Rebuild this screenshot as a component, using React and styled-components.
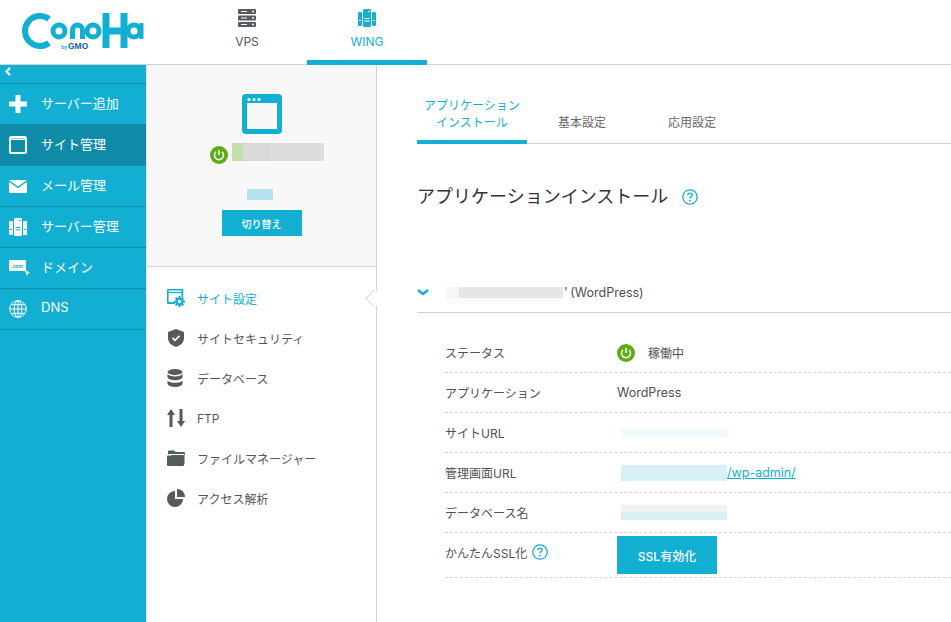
import React from "react";
import styled, { createGlobalStyle } from "styled-components";

const BLUE = "#13afd3";
const DARK = "#555a5c";

const GlobalStyle = createGlobalStyle`
  html, body {
    margin: 0;
    height: 100%;
    background: #fff;
    overflow: hidden;
  }
  body {
    font-family: Inter, "Noto Sans CJK JP", sans-serif;
    font-size: 12px;
    color: #505050;
  }
  * { box-sizing: border-box; }
`;

function Logo() {
  return (
    <svg width="160" height="64" viewBox="0 0 160 64">
      <g fill="none" stroke={BLUE}>
        <path d="M49 19A15 15 0 1 0 49 43" strokeWidth="6" />
        <circle cx="59" cy="31" r="6" strokeWidth="5" />
        <path d="M72.500 39V30a5 5 0 0 1 10 0v9" strokeWidth="5" />
        <circle cx="93" cy="31" r="6" strokeWidth="5" />
        <path d="M106 13v35M124 13v35M105 31h19" strokeWidth="7" />
        <circle cx="134" cy="31" r="6" strokeWidth="5" />
        <path d="M141.500 23v16" strokeWidth="4" />
      </g>
      <rect x="60" y="40.500" width="38" height="9.500" fill="#fff" />
      <text x="61" y="49" fontFamily="Liberation Sans, sans-serif" fontSize="5.500" fontWeight="700" fill={BLUE}>by</text>
      <text x="68" y="49" fontFamily="Liberation Sans, sans-serif" fontSize="8.500" fontWeight="700" fill="#1c5fa8">GMO</text>
    </svg>
  );
}

function VpsIcon() {
  return (
    <svg width="18" height="18" viewBox="0 0 18 18" fill={DARK}>
      <rect x="0" y="0" width="18" height="5" rx="1" />
      <rect x="0" y="6.500" width="18" height="5" rx="1" />
      <rect x="0" y="13" width="18" height="5" rx="1" />
      <g fill="#fff">
        <rect x="3" y="2" width="6" height="1" />
        <rect x="3" y="8.500" width="6" height="1" />
        <rect x="3" y="15" width="6" height="1" />
        <circle cx="15" cy="2.500" r="1" />
        <circle cx="15" cy="9" r="1" />
        <circle cx="15" cy="15.500" r="1" />
      </g>
    </svg>
  );
}

function ServersIcon({ color, size = 18 }) {
  return (
    <svg width={size} height={size} viewBox="0 0 18 18" fill={color}>
      <rect x="0" y="3" width="4" height="14" rx="1" />
      <rect x="14" y="3" width="4" height="14" rx="1" />
      <rect x="5" y="0" width="8" height="18" rx="1.500" />
      <g fill="var(--cut, #fff)">
        <rect x="6.500" y="9" width="5" height="1" />
        <rect x="6.500" y="11.500" width="5" height="1" />
        <rect x="1" y="11" width="2" height="1" />
        <rect x="15" y="11" width="2" height="1" />
        <circle cx="11" cy="2.500" r="0.800" />
      </g>
    </svg>
  );
}

function SideIcon({ name }) {
  if (name === "plus") {
    return (
      <svg width="18" height="18" viewBox="0 0 18 18" fill="#fff">
        <path d="M6.500 0h5v6.500H18v5h-6.500V18h-5v-6.500H0v-5h6.500z" />
      </svg>
    );
  }
  if (name === "window") {
    return (
      <svg width="18" height="18" viewBox="0 0 18 18">
        <rect x="1" y="1" width="16" height="16" rx="1.500" fill="none" stroke="#fff" strokeWidth="2" />
        <path d="M1 3.200h16" stroke="#fff" strokeWidth="1.500" />
      </svg>
    );
  }
  if (name === "mail") {
    return (
      <svg width="18" height="13" viewBox="0 0 18 13" fill="#fff">
        <path d="M0 0h18L9 6.500z" />
        <path d="M0 1.800l9 6.500 9-6.500V12a1 1 0 0 1-1 1H1a1 1 0 0 1-1-1z" />
      </svg>
    );
  }
  if (name === "server") return <Cut><ServersIcon color="#fff" /></Cut>;
  if (name === "domain") {
    return (
      <svg width="21" height="16" viewBox="0 0 21 16">
        <rect x="0" y="0" width="17" height="11" rx="1" fill="#fff" />
        <text x="2.500" y="7.500" fontFamily="Roboto, sans-serif" fontSize="5" fontWeight="700" fill={BLUE}>.com</text>
        <path d="M16 10l5 2.500-2 1-1 2.500z" fill="#fff" />
      </svg>
    );
  }
  return (
    <svg width="18" height="18" viewBox="0 0 18 18" fill="none" stroke="#fff" strokeWidth="1">
      <circle cx="9" cy="9" r="8.300" />
      <ellipse cx="9" cy="9" rx="3.800" ry="8.300" />
      <path d="M9 .7v16.600M.7 9h16.600M2 4.700h14M2 13.300h14" />
    </svg>
  );
}

function MenuIcon({ name }) {
  if (name === "settings") {
    return (
      <svg width="18" height="18" viewBox="0 0 18 18">
        <path d="M8 14H1.500a.8.8 0 0 1-.8-.8V1.500A.8.8 0 0 1 1.500.7h13a.8.8 0 0 1 .8.800V8" fill="none" stroke={BLUE} strokeWidth="1.800" />
        <path d="M1 3.500h14" stroke={BLUE} strokeWidth="1.200" />
        <circle cx="12.500" cy="12.500" r="4" fill={BLUE} />
        <path d="M12.500 7v11M7 12.500h11M8.600 8.600l7.800 7.800M8.600 16.400l7.800-7.800" stroke={BLUE} strokeWidth="2" />
        <circle cx="12.500" cy="12.500" r="1.700" fill="#fff" />
      </svg>
    );
  }
  if (name === "shield") {
    return (
      <svg width="18" height="18" viewBox="0 0 18 18">
        <path d="M9 0l8 3v6c0 4.500-3.500 7.500-8 9-4.500-1.500-8-4.500-8-9V3z" fill={DARK} />
        <path d="M5.500 8.800l2.500 2.500 4.500-4.500" fill="none" stroke="#fff" strokeWidth="1.700" />
      </svg>
    );
  }
  if (name === "db") {
    return (
      <svg width="16" height="18" viewBox="0 0 16 18" fill={DARK}>
        <ellipse cx="8" cy="3" rx="7.500" ry="3" />
        <path d="M.5 5c1 1.600 4 2.400 7.500 2.400S14.500 6.600 15.500 5v3.500c-.8 1.800-4 2.700-7.500 2.700S1.300 10.300.5 8.500z" />
        <path d="M.5 11.500C1.500 13 4.500 13.800 8 13.800s6.500-.8 7.500-2.300V15c-.8 2-4 3-7.500 3s-6.700-1-7.500-3z" />
      </svg>
    );
  }
  if (name === "ftp") {
    return (
      <svg width="18" height="18" viewBox="0 0 18 18" fill={DARK}>
        <path d="M4 0l4 6H5.500v12h-3V6H0z" />
        <path d="M14 18l-4-6h2.500V0h3v12H18z" />
      </svg>
    );
  }
  if (name === "folder") {
    return (
      <svg width="18" height="16" viewBox="0 0 18 16" fill={DARK}>
        <path d="M1 5V1.500A1 1 0 0 1 2 .5h5l1.500 1.500H17a1 1 0 0 1 1 1V14h-.500V5a1 1 0 0 0-1-1H2a1 1 0 0 0-1 1z" />
        <path d="M0 6.500a1 1 0 0 1 1-1h3l1.500-.5H16a1 1 0 0 1 1 1v9a1 1 0 0 1-1 1H1a1 1 0 0 1-1-1z" />
      </svg>
    );
  }
  return (
    <svg width="18" height="18" viewBox="0 0 18 18" fill={DARK}>
      <path d="M8 2a8 8 0 1 0 8 8H8z" />
      <path d="M10 0a8 8 0 0 1 8 8h-8z" />
    </svg>
  );
}

function PowerIcon({ size = 18 }) {
  return (
    <svg width={size} height={size} viewBox="0 0 18 18">
      <circle cx="9" cy="9" r="9" fill="#5cad10" />
      <path d="M6 5.800a4.500 4.500 0 1 0 6 0" fill="none" stroke="#fff" strokeWidth="1.500" />
      <path d="M9 4v5" stroke="#fff" strokeWidth="1.500" />
    </svg>
  );
}

function HelpIcon({ size = 16 }) {
  return (
    <svg width={size} height={size} viewBox="0 0 16 16" fill="none" stroke={BLUE}>
      <circle cx="8" cy="8" r="7.200" strokeWidth="1.300" />
      <path d="M5.800 6.200C5.800 4.900 6.800 4.100 8 4.100s2.200.8 2.200 1.900c0 1.500-2.200 1.700-2.200 3.500" strokeWidth="1.400" />
      <circle cx="8" cy="11.700" r=".9" fill={BLUE} stroke="none" />
    </svg>
  );
}

const sideItems = [
  { icon: "plus", label: "サーバー追加" },
  { icon: "window", label: "サイト管理", active: true },
  { icon: "mail", label: "メール管理" },
  { icon: "server", label: "サーバー管理" },
  { icon: "domain", label: "ドメイン" },
  { icon: "globe", label: "DNS" },
];

const menuItems = [
  { icon: "settings", label: "サイト設定", active: true },
  { icon: "shield", label: "サイトセキュリティ" },
  { icon: "db", label: "データベース" },
  { icon: "ftp", label: "FTP" },
  { icon: "folder", label: "ファイルマネージャー" },
  { icon: "pie", label: "アクセス解析" },
];

export default function App() {
  return (
    <>
      <GlobalStyle />
      <Page>
        <Header>
          <LogoBox><Logo /></LogoBox>
          <HeaderTab>
            <VpsIcon />
            VPS
          </HeaderTab>
          <HeaderTab $active>
            <ServersIcon color={BLUE} />
            WING
          </HeaderTab>
        </Header>
        <Body>
          <Sidebar>
            <Collapse>
              <svg width="6" height="9" viewBox="0 0 6 9" fill="none" stroke="#fff" strokeWidth="2">
                <path d="M5 .7L1.500 4.500 5 8.300" />
              </svg>
            </Collapse>
            {sideItems.map((item) => (
              <SideItem key={item.label} $active={item.active}>
                <SideIconBox><SideIcon name={item.icon} /></SideIconBox>
                <SideLabel>{item.label}</SideLabel>
              </SideItem>
            ))}
          </Sidebar>
          <SubPanel>
            <SiteCard>
              <SiteIcon>
                <svg width="40" height="40" viewBox="0 0 40 40">
                  <rect width="40" height="40" rx="4" fill={BLUE} />
                  <rect x="5" y="9" width="30" height="26" fill="#f8f8f8" />
                  <circle cx="7" cy="5.500" r="1.600" fill="#f8f8f8" />
                  <circle cx="12" cy="5.500" r="1.600" fill="#f8f8f8" />
                  <circle cx="17" cy="5.500" r="1.600" fill="#f8f8f8" />
                </svg>
              </SiteIcon>
              <SiteName>
                <PowerBox><PowerIcon /></PowerBox>
                <NameBlur />
              </SiteName>
              <PlanBlur />
              <SwitchButton>切り替え</SwitchButton>
            </SiteCard>
            <Menu>
              {menuItems.map((item) => (
                <MenuItem key={item.label} $active={item.active}>
                  <MenuIconBox><MenuIcon name={item.icon} /></MenuIconBox>
                  {item.label}
                </MenuItem>
              ))}
            </Menu>
            <Pointer />
          </SubPanel>
          <Main>
            <Tabs>
              <Tab $active>アプリケーション<br />インストール</Tab>
              <Tab>基本設定</Tab>
              <Tab>応用設定</Tab>
            </Tabs>
            <Heading>
              アプリケーションインストール
              <HelpIcon />
            </Heading>
            <AccordionHead>
              <svg width="12" height="7" viewBox="0 0 12 7" fill="none" stroke={BLUE} strokeWidth="2.400">
                <path d="M1 1l5 4 5-4" />
              </svg>
              <TitleBlur />
              <AppName>' (WordPress)</AppName>
            </AccordionHead>
            <Table>
              <Row>
                <Label>ステータス</Label>
                <Value>
                  <PowerIcon />
                  <StatusText>稼働中</StatusText>
                </Value>
              </Row>
              <Row>
                <Label>アプリケーション</Label>
                <Value>WordPress</Value>
              </Row>
              <Row>
                <Label>サイトURL</Label>
                <Value><Blur $w={108} $h={9} $c="#f1fafc" /></Value>
              </Row>
              <Row>
                <Label>管理画面URL</Label>
                <Value>
                  <Blur $w={106} $h={16} $c="#d8f0f6" />
                  <AdminLink>/wp-admin/</AdminLink>
                </Value>
              </Row>
              <Row>
                <Label>データベース名</Label>
                <Value><DbBlur /></Value>
              </Row>
              <Row $last>
                <Label $raised>
                  かんたんSSL化
                  <HelpIcon />
                </Label>
                <Value><SslButton>SSL有効化</SslButton></Value>
              </Row>
            </Table>
          </Main>
        </Body>
      </Page>
    </>
  );
}

const Page = styled.div`
  display: flex;
  flex-direction: column;
  height: 100vh;
  overflow: hidden;
`;

const Header = styled.header`
  display: flex;
  height: 65px;
  flex: none;
  border-bottom: 1px solid #d2d2d2;
`;

const LogoBox = styled.div`
  width: 187px;
  height: 64px;
`;

const HeaderTab = styled.div`
  width: 120px;
  height: 65px;
  margin-bottom: -1px;
  padding-top: 9px;
  display: flex;
  flex-direction: column;
  align-items: center;
  gap: 7px;
  font-size: 12px;
  line-height: 15px;
  color: ${(p) => (p.$active ? BLUE : "#555")};
  border-bottom: 5px solid ${(p) => (p.$active ? BLUE : "transparent")};
`;

const Body = styled.div`
  display: flex;
  flex: 1;
  min-height: 0;
`;

const Sidebar = styled.nav`
  width: 147px;
  flex: none;
  background: ${BLUE};
  border-right: 1px solid #e4e4e4;
`;

const Collapse = styled.div`
  height: 19px;
  padding: 2px 0 0 5px;
  border-bottom: 1px solid #0f8dab;
  display: flex;
  align-items: flex-start;
`;

const SideItem = styled.div`
  height: 41px;
  display: flex;
  align-items: center;
  font-size: 13px;
  color: #fff;
  background: ${(p) => (p.$active ? "#0f8ba8" : "transparent")};
  border-bottom: 1px solid #0f8dab;
  --cut: ${BLUE};
`;

const SideIconBox = styled.span`
  width: 41px;
  padding-left: 9px;
  display: flex;
  align-items: center;
  flex: none;
`;

const SideLabel = styled.span`
  margin-top: -4px;
`;

const Cut = styled.span`
  display: flex;
  --cut: ${BLUE};
`;

const SubPanel = styled.aside`
  position: relative;
  width: 230px;
  flex: none;
  border-right: 1px solid #d2d2d2;
`;

const SiteCard = styled.div`
  height: 202px;
  padding-top: 29px;
  background: #f8f8f8;
  border-bottom: 1px solid #d2d2d2;
  display: flex;
  flex-direction: column;
  align-items: center;
`;

const SiteIcon = styled.div`
  height: 40px;
`;

const SiteName = styled.div`
  display: flex;
  gap: 4px;
  margin: 9px 0 0 11px;
`;

const PowerBox = styled.span`
  display: flex;
  margin-top: 3px;
`;

const NameBlur = styled.div`
  width: 92px;
  height: 18px;
  background: linear-gradient(90deg, #c5dfaa 0 11px, #d9d9d9 11px 38px, #dcdddc 38px);
`;

const PlanBlur = styled.div`
  width: 26px;
  height: 11px;
  margin: 25px 4px 0 0;
  background: #b6e2ef;
`;

const SwitchButton = styled.button`
  width: 80px;
  height: 26px;
  margin-top: 10px;
  padding: 0;
  border: 0;
  background: ${BLUE};
  color: #fff;
  font: 500 10px Inter, "Noto Sans CJK JP", sans-serif;
`;

const Menu = styled.ul`
  list-style: none;
  margin: 0;
  padding: 11px 0 0 20px;
`;

const MenuItem = styled.li`
  height: 40px;
  display: flex;
  align-items: center;
  font-size: 12px;
  color: ${(p) => (p.$active ? BLUE : "#555")};
`;

const MenuIconBox = styled.span`
  width: 30px;
  display: flex;
  flex: none;
`;

const Pointer = styled.span`
  position: absolute;
  left: 221px;
  top: 227px;
  width: 13px;
  height: 13px;
  background: #fff;
  border-left: 1px solid #dcdcdc;
  border-bottom: 1px solid #dcdcdc;
  transform: rotate(45deg);
`;

const Main = styled.main`
  flex: 1;
  min-width: 0;
  padding: 29px 0 0 40px;
`;

const Tabs = styled.div`
  display: flex;
  align-items: flex-end;
  border-bottom: 1px solid #d2d2d2;
  height: 50px;
`;

const Tab = styled.div`
  width: 110px;
  height: 50px;
  margin-bottom: -1px;
  padding-top: ${(p) => (p.$active ? "3px" : "20px")};
  text-align: center;
  line-height: 17px;
  font-size: 12px;
  color: ${(p) => (p.$active ? BLUE : "#666")};
  border-bottom: 4px solid ${(p) => (p.$active ? BLUE : "transparent")};
`;

const Heading = styled.h1`
  margin: 41px 0 0;
  height: 24px;
  display: flex;
  align-items: center;
  gap: 14px;
  font-size: 18px;
  line-height: 24px;
  font-weight: 400;
  color: #333;
`;

const AccordionHead = styled.div`
  height: 41px;
  margin-top: 63px;
  display: flex;
  align-items: center;
  border-bottom: 1px solid #d2d2d2;
`;

const TitleBlur = styled.span`
  width: 117px;
  height: 11px;
  margin: 0 1px 0 17px;
  background: linear-gradient(90deg, #f6f6f6 0 13px, #e6e6e6 13px);
  box-shadow: 0 6px 0 #fbfbfb;
`;

const AppName = styled.span`
  font-size: 12.5px;
  word-spacing: -1px;
`;

const Table = styled.div`
  margin: 20px 0 0 28px;
`;

const Row = styled.div`
  display: flex;
  align-items: center;
  height: ${(p) => (p.$last ? "45px" : "40px")};
  border-bottom: 1px dashed #d5d5d5;
`;

const Label = styled.div`
  width: 172px;
  flex: none;
  display: flex;
  align-items: center;
  gap: 5px;
  margin-top: ${(p) => (p.$raised ? "-6px" : "0")};
`;

const Value = styled.div`
  display: flex;
  align-items: center;
  font-size: 12.5px;
`;

const StatusText = styled.span`
  margin-left: 13px;
  font-size: 12px;
`;

const Blur = styled.span`
  display: block;
  margin-left: 4px;
  width: ${(p) => p.$w}px;
  height: ${(p) => p.$h}px;
  background: ${(p) => p.$c};
`;

const DbBlur = styled.span`
  display: block;
  margin-left: 4px;
  width: 106px;
  height: 15px;
  background: linear-gradient(180deg, #f1f1f1 0 7px, #d8f0f6 7px);
`;

const AdminLink = styled.a`
  color: ${BLUE};
  text-decoration: underline;
`;

const SslButton = styled.button`
  width: 100px;
  height: 38px;
  padding: 0;
  border: 0;
  background: ${BLUE};
  color: #fff;
  font: 500 12px Inter, "Noto Sans CJK JP", sans-serif;
`;
